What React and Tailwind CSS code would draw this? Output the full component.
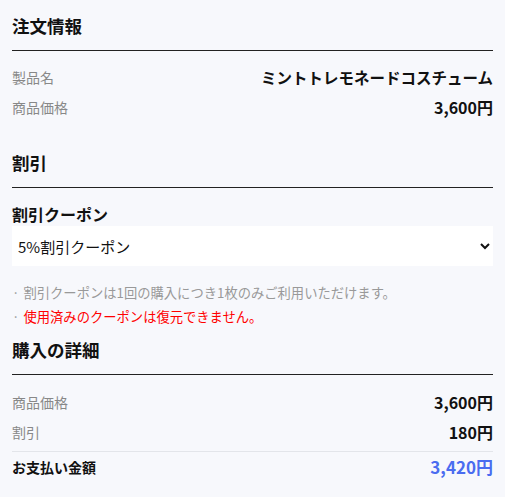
import React, { useState } from 'react';

const Row = ({ label, value, valueClass = 'text-[16px]' }) => (
  <div className="flex justify-between items-center leading-[30px]">
    <span className="text-[14px] text-[#888]">{label}</span>
    <span className={`font-bold text-[#111] ${valueClass}`}>{value}</span>
  </div>
);

const SectionTitle = ({ children }) => (
  <h2 className="text-[17.5px] leading-[25px] font-bold text-[#111] pb-[12px] border-b border-[#222]">
    {children}
  </h2>
);

const App = () => {
  const [coupon, setCoupon] = useState('5');

  return (
    <div
      className="min-h-screen bg-[#f7f8fc] px-3 pt-[13px] pb-4"
      style={{ fontFamily: '"Noto Sans CJK JP", "Noto Sans", sans-serif' }}
    >
      {/* 注文情報 */}
      <SectionTitle>注文情報</SectionTitle>
      <div className="mt-[11px]">
        <Row label="製品名" value="ミントトレモネードコスチューム" valueClass="text-[15.5px]" />
        <Row label="商品価格" value="3,600円" />
      </div>

      {/* 割引 */}
      <div className="mt-[28px]">
        <SectionTitle>割引</SectionTitle>
      </div>
      <div className="mt-[14px]">
        <label className="block text-[16px] leading-[24px] font-bold text-[#111]">割引クーポン</label>
        <select
          value={coupon}
          onChange={(e) => setCoupon(e.target.value)}
          className="w-full h-[40px] bg-white text-[15px] text-[#111] px-[2px] outline-none"
        >
          <option value="5">5%割引クーポン</option>
          <option value="">クーポンを使用しない</option>
        </select>
      </div>
      <ul className="mt-[15px] text-[13.3px] leading-[24px]">
        <li className="text-[#999]">
          <span className="mr-[4px]">·</span>割引クーポンは1回の購入につき1枚のみご利用いただけます。
        </li>
        <li className="text-[#f00]">
          <span className="mr-[4px] text-[#999]">·</span>使用済みのクーポンは復元できません。
        </li>
      </ul>

      {/* 購入の詳細 */}
      <div className="mt-[8px]">
        <SectionTitle>購入の詳細</SectionTitle>
      </div>
      <div className="mt-[12px]">
        <Row label="商品価格" value="3,600円" />
        <Row label="割引" value="180円" />
        <div className="mt-[4px] border-t border-[#e3e5ea] flex justify-between items-center leading-[30px]">
          <span className="text-[14px] font-bold text-[#111]">お支払い金額</span>
          <span className="text-[17px] font-bold text-[#4a6cf0]">3,420円</span>
        </div>
      </div>
    </div>
  );
};

export default App;
